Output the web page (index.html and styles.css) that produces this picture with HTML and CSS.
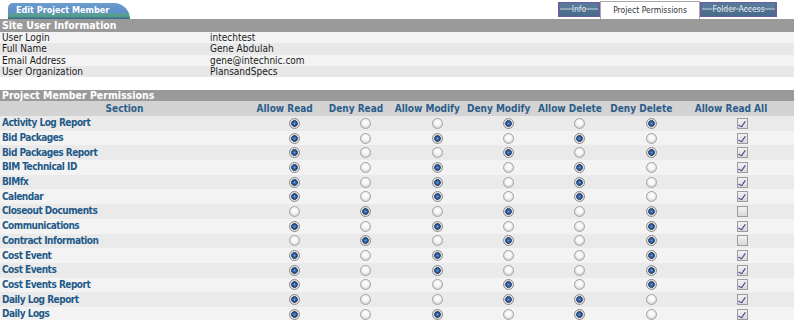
FILE: index.html
```html
<!DOCTYPE html>
<html>
<head>
<meta charset="utf-8">
<link rel="stylesheet" href="styles.css">
</head>
<body>
<div class="tabbar">
  <div class="title-tab">Edit Project Member</div>
  <nav class="tabs">
    <a class="tab">Info</a>
    <a class="tab active">Project Permissions</a>
    <a class="tab">Folder Access</a>
  </nav>
</div>
<div class="section-head">Site User Information</div>
<div class="info">
  <div class="info-row"><span>User Login</span><span>intechtest</span></div>
  <div class="info-row"><span>Full Name</span><span>Gene Abdulah</span></div>
  <div class="info-row"><span>Email Address</span><span>gene@intechnic.com</span></div>
  <div class="info-row"><span>User Organization</span><span>PlansandSpecs</span></div>
</div>
<div class="section-head perm-head">Project Member Permissions</div>
<table class="perm">
  <colgroup>
    <col class="c-sec"><col class="c-r"><col class="c-r"><col class="c-r"><col class="c-r"><col class="c-r"><col class="c-r"><col class="c-all">
  </colgroup>
  <thead>
    <tr><th>Section</th><th>Allow Read</th><th>Deny Read</th><th>Allow Modify</th><th>Deny Modify</th><th>Allow Delete</th><th>Deny Delete</th><th class="th-all">Allow Read All</th></tr>
  </thead>
  <tbody>
    <tr><td class="name">Activity Log Report</td><td><span class="radio on"></span></td><td><span class="radio"></span></td><td><span class="radio"></span></td><td><span class="radio on"></span></td><td><span class="radio"></span></td><td><span class="radio on"></span></td><td class="all"><span class="chk on"></span></td></tr>
    <tr><td class="name">Bid Packages</td><td><span class="radio on"></span></td><td><span class="radio"></span></td><td><span class="radio on"></span></td><td><span class="radio"></span></td><td><span class="radio on"></span></td><td><span class="radio"></span></td><td class="all"><span class="chk on"></span></td></tr>
    <tr><td class="name">Bid Packages Report</td><td><span class="radio on"></span></td><td><span class="radio"></span></td><td><span class="radio"></span></td><td><span class="radio on"></span></td><td><span class="radio"></span></td><td><span class="radio on"></span></td><td class="all"><span class="chk on"></span></td></tr>
    <tr><td class="name">BIM Technical ID</td><td><span class="radio on"></span></td><td><span class="radio"></span></td><td><span class="radio on"></span></td><td><span class="radio"></span></td><td><span class="radio on"></span></td><td><span class="radio"></span></td><td class="all"><span class="chk on"></span></td></tr>
    <tr><td class="name">BIMfx</td><td><span class="radio on"></span></td><td><span class="radio"></span></td><td><span class="radio on"></span></td><td><span class="radio"></span></td><td><span class="radio on"></span></td><td><span class="radio"></span></td><td class="all"><span class="chk on"></span></td></tr>
    <tr><td class="name">Calendar</td><td><span class="radio on"></span></td><td><span class="radio"></span></td><td><span class="radio on"></span></td><td><span class="radio"></span></td><td><span class="radio on"></span></td><td><span class="radio"></span></td><td class="all"><span class="chk on"></span></td></tr>
    <tr><td class="name">Closeout Documents</td><td><span class="radio"></span></td><td><span class="radio on"></span></td><td><span class="radio"></span></td><td><span class="radio on"></span></td><td><span class="radio"></span></td><td><span class="radio on"></span></td><td class="all"><span class="chk"></span></td></tr>
    <tr><td class="name">Communications</td><td><span class="radio on"></span></td><td><span class="radio"></span></td><td><span class="radio on"></span></td><td><span class="radio"></span></td><td><span class="radio"></span></td><td><span class="radio on"></span></td><td class="all"><span class="chk on"></span></td></tr>
    <tr><td class="name">Contract Information</td><td><span class="radio"></span></td><td><span class="radio on"></span></td><td><span class="radio"></span></td><td><span class="radio on"></span></td><td><span class="radio"></span></td><td><span class="radio on"></span></td><td class="all"><span class="chk"></span></td></tr>
    <tr><td class="name">Cost Event</td><td><span class="radio on"></span></td><td><span class="radio"></span></td><td><span class="radio on"></span></td><td><span class="radio"></span></td><td><span class="radio"></span></td><td><span class="radio on"></span></td><td class="all"><span class="chk on"></span></td></tr>
    <tr><td class="name">Cost Events</td><td><span class="radio on"></span></td><td><span class="radio"></span></td><td><span class="radio on"></span></td><td><span class="radio"></span></td><td><span class="radio"></span></td><td><span class="radio on"></span></td><td class="all"><span class="chk on"></span></td></tr>
    <tr><td class="name">Cost Events Report</td><td><span class="radio on"></span></td><td><span class="radio"></span></td><td><span class="radio"></span></td><td><span class="radio on"></span></td><td><span class="radio"></span></td><td><span class="radio on"></span></td><td class="all"><span class="chk on"></span></td></tr>
    <tr><td class="name">Daily Log Report</td><td><span class="radio on"></span></td><td><span class="radio"></span></td><td><span class="radio"></span></td><td><span class="radio on"></span></td><td><span class="radio on"></span></td><td><span class="radio"></span></td><td class="all"><span class="chk on"></span></td></tr>
    <tr><td class="name">Daily Logs</td><td><span class="radio on"></span></td><td><span class="radio"></span></td><td><span class="radio on"></span></td><td><span class="radio"></span></td><td><span class="radio on"></span></td><td><span class="radio"></span></td><td class="all"><span class="chk on"></span></td></tr>
  </tbody>
</table>
</body>
</html>
```
FILE: styles.css
```css
* { box-sizing: border-box; }
html, body { margin: 0; padding: 0; background: #fff; }
body {
  width: 794px;
  font-family: "DejaVu Sans Condensed", "DejaVu Sans", sans-serif;
  font-size: 10px;
  color: #1a1a1a;
  overflow: hidden;
}

/* top tab bar */
.tabbar {
  height: 19px;
  display: flex;
  justify-content: space-between;
  align-items: flex-start;
}
.title-tab {
  margin: 3px 0 0 8px;
  width: 122px;
  height: 16px;
  padding: 2px 0 0 8px;
  color: #fff;
  font-weight: bold;
  font-size: 9px;
  line-height: 11px;
  border-radius: 5px 16px 0 0 / 5px 16px 0 0;
  background: linear-gradient(#6a9ccf 0, #5e90c6 10px, #5aa28f 11px, #4f9a89 14px, #3d6b8c 15px);
}
.tabs {
  display: flex;
  margin-right: 17px;
  height: 19px;
  align-items: flex-start;
}
.tab {
  display: block;
  font-size: 8.5px;
  text-align: center;
  white-space: nowrap;
}
.tab:not(.active) {
  margin-top: 2px;
  height: 15px;
  line-height: 13px;
  border: 1px solid #6a5f9c;
  border-left-width: 2px;
  border-right-width: 2px;
  color: #eef2f6;
  text-shadow: 0 0 1px #3d5d7c, 0 0 1px #3d5d7c;
  background: linear-gradient(#56799a 0, #5a7d9c 5.5px, #8ea5ba 5.5px, #8ea5ba 7px, #4e7191 7px, #4a6c8c 100%);
}
.tab:first-child { width: 42px; }
.tab:last-child { width: 77px; }
.tab.active {
  margin-top: 1px;
  width: 100px;
  height: 18px;
  line-height: 16px;
  border: 1px solid #a8a8a8;
  border-bottom: 0;
  color: #333;
  background: #fff;
}

/* section headers */
.section-head {
  height: 13px;
  line-height: 13px;
  padding-left: 2px;
  background: #9a9a9a;
  color: #fff;
  font-weight: bold;
  font-size: 10.5px;
}
.perm-head {
  margin-top: 13px;
  height: 11px;
  line-height: 11px;
}

/* info */
.info-row {
  display: grid;
  grid-template-columns: 208px 1fr;
  height: 11.25px;
  line-height: 11px;
  padding-left: 2px;
  font-size: 10px;
  color: #1a1a1a;
}
.info-row:nth-child(odd) { background: #f3f3f3; }
.info-row:nth-child(even) { background: #e8e8e8; }

/* permissions table */
.perm {
  width: 794px;
  border-collapse: collapse;
  table-layout: fixed;
}
.c-sec { width: 249px; }
.c-r { width: 71.33px; }
.c-all { width: 117px; }
.perm th {
  height: 15px;
  padding: 0;
  background: #d3d3d3;
  color: #2b5d8a;
  font-size: 10px;
  font-weight: bold;
  text-align: center;
  white-space: nowrap;
}
.perm th.th-all { padding-right: 9px; }
.perm td {
  height: 14.7px;
  padding: 0 0 0 20px;
  text-align: center;
  line-height: 0;
}
.perm td.name {
  padding-left: 2px;
  text-align: left;
  line-height: 12px;
  color: #1f5a88;
  font-weight: bold;
  font-size: 10px;
  letter-spacing: -0.5px;
}
.perm td.all { padding-left: 15px; }
.perm tbody tr:nth-child(odd) { background: #eaeaea; }
.perm tbody tr:nth-child(even) { background: #f3f3f3; }

.radio {
  display: inline-block;
  width: 11px;
  height: 11px;
  border-radius: 50%;
  border: 1px solid #a4a4a4;
  background: radial-gradient(circle at 50% 40%, #ffffff 0, #f4f4f4 3px, #d8d8d8 5px);
  vertical-align: middle;
}
.radio.on {
  border-color: #8a8a8a;
  background: radial-gradient(circle at 50% 50%, #6fa2e0 0, #2e62a8 1.6px, #1c3f70 2.6px, #5a6b80 3.2px, #d6d6d6 3.6px, #f0f0f0 5px);
}
.chk {
  display: inline-block;
  position: relative;
  width: 11px;
  height: 11px;
  border: 1px solid #9c9c9c;
  background: linear-gradient(#f2f2f2, #d9d9d9);
  vertical-align: middle;
}
.chk.on::after {
  content: "";
  position: absolute;
  left: 2px;
  top: 1px;
  width: 3px;
  height: 6px;
  border-right: 1.5px solid #3a3f8c;
  border-bottom: 1.5px solid #3a3f8c;
  transform: rotate(35deg) skewY(-10deg);
}
```
